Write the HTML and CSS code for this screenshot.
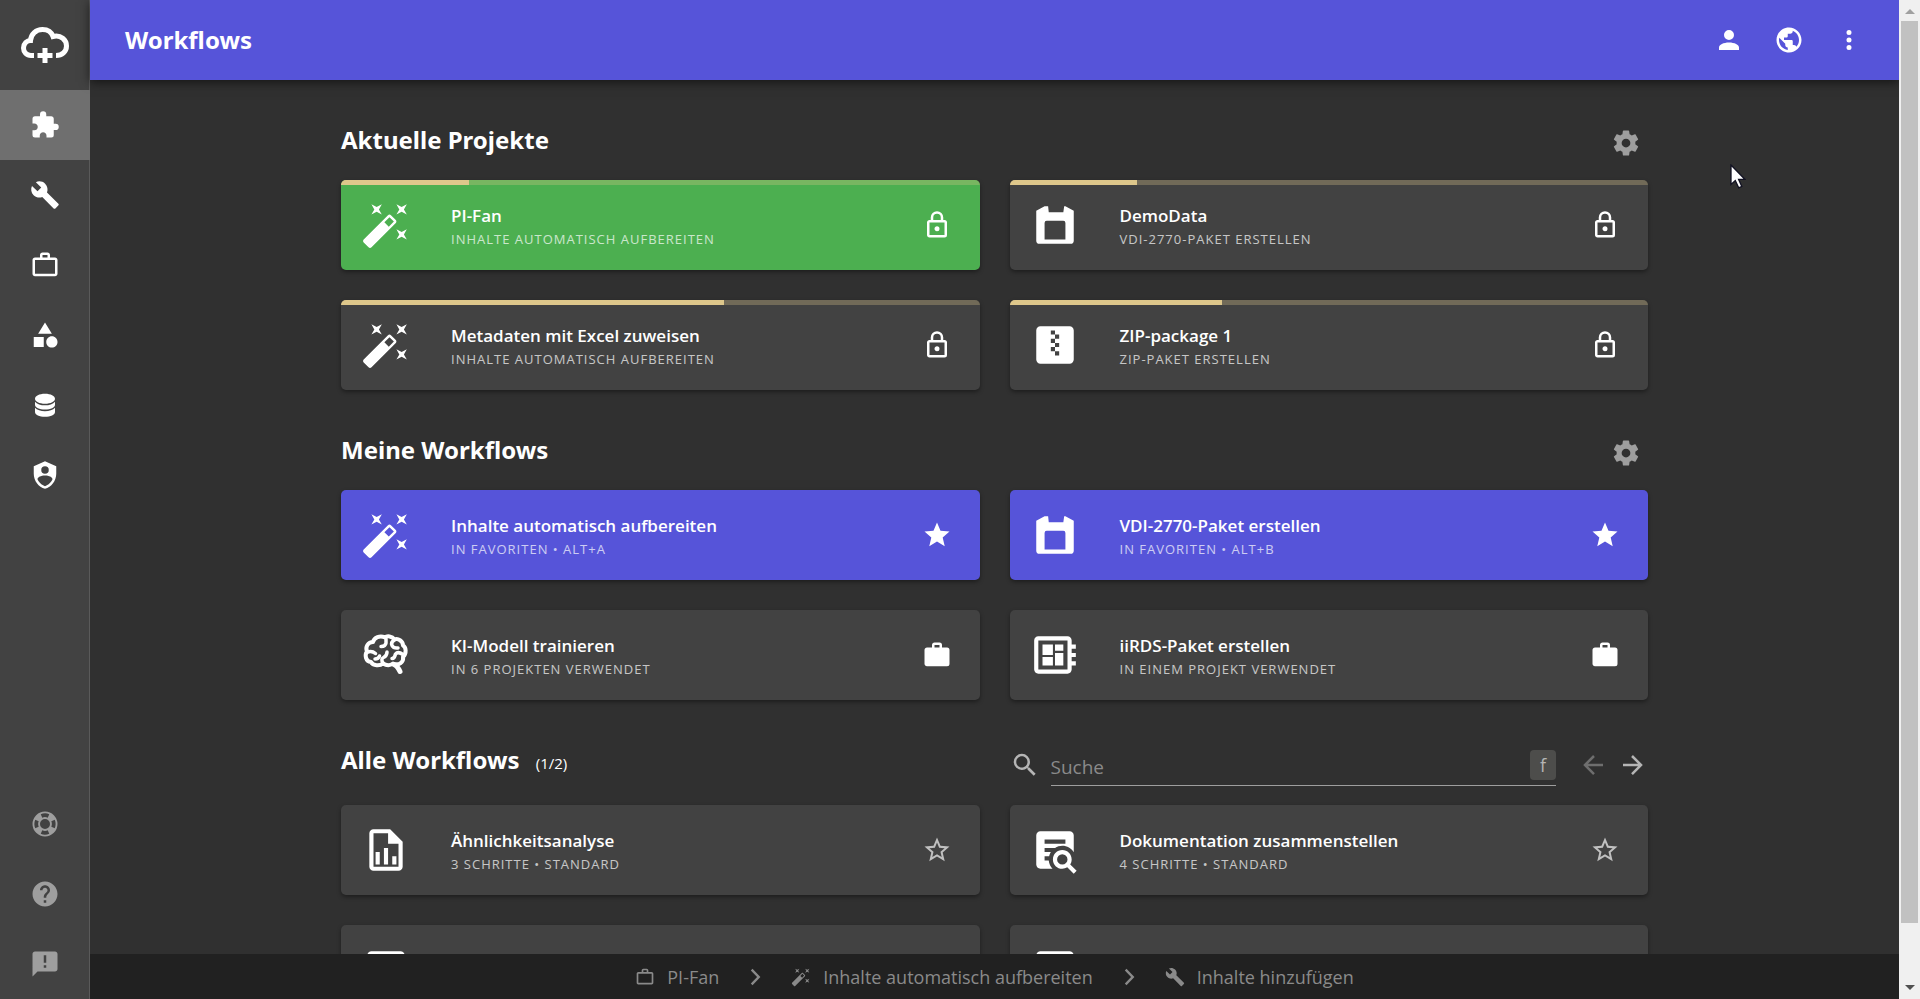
FILE: index.html
```html
<!DOCTYPE html>
<html lang="de">
<head>
    <meta charset="UTF-8">
    <meta name="viewport" content="width=device-width, initial-scale=1.0">
    <title>Workflows</title>
    <link rel="stylesheet" href="styles.css">
</head>
<body>
    <!-- Icons -->
    <svg class="sprite" aria-hidden="true">
        <symbol id="puzzle" viewBox="0 0 24 24"><path d="M20.5,11H19V7C19,5.89 18.1,5 17,5H13V3.5A2.5,2.5 0 0,0 10.5,1A2.5,2.5 0 0,0 8,3.5V5H4A2,2 0 0,0 2,7V10.8H3.5C5,10.8 6.2,12 6.2,13.5C6.2,15 5,16.2 3.5,16.2H2V20A2,2 0 0,0 4,22H7.8V20.5C7.8,19 9,17.8 10.5,17.8C12,17.8 13.2,19 13.2,20.5V22H17A2,2 0 0,0 19,20V16H20.5A2.5,2.5 0 0,0 23,13.5A2.5,2.5 0 0,0 20.5,11Z"/></symbol>
        <symbol id="wrench" viewBox="0 0 24 24"><path d="M22.7,19L13.6,9.9C14.5,7.6 14,4.9 12.1,3C10.1,1 7.1,0.6 4.7,1.7L9,6L6,9L1.6,4.7C0.4,7.1 0.9,10.1 2.9,12.1C4.8,14 7.5,14.5 9.8,13.6L18.9,22.7C19.3,23.1 19.9,23.1 20.3,22.7L22.6,20.4C23.1,20 23.1,19.3 22.7,19Z"/></symbol>
        <symbol id="briefcase-outline" viewBox="0 0 24 24"><path d="M14 6V4h-4v2h4zM4 8v11h16V8H4zm16-2c1.11 0 2 .89 2 2v11c0 1.11-.89 2-2 2H4c-1.11 0-2-.89-2-2l.01-11c0-1.11.88-2 1.99-2h4V4c0-1.11.89-2 2-2h4c1.11 0 2 .89 2 2v2h4z"/></symbol>
        <symbol id="briefcase" viewBox="0 0 24 24"><path d="M10,2H14A2,2 0 0,1 16,4V6H20A2,2 0 0,1 22,8V19A2,2 0 0,1 20,21H4C2.89,21 2,20.1 2,19V8C2,6.89 2.89,6 4,6H8V4C8,2.89 8.89,2 10,2M14,6V4H10V6H14Z"/></symbol>
        <symbol id="shape" viewBox="0 0 24 24"><path d="M11,13.5V21.5H3V13.5H11M12,2L17.5,11H6.5L12,2M17.5,13C20,13 22,15 22,17.5C22,20 20,22 17.5,22C15,22 13,20 13,17.5C13,15 15,13 17.5,13Z"/></symbol>
        <symbol id="database" viewBox="0 0 24 24"><path d="M12 3c4.6 0 8 1.7 8 4s-3.400 4-8 4-8-1.700-8-4 3.400-4 8-4zM4 9.300c1.500 1.900 4.600 2.900 8 2.900s6.500-1 8-2.900v2.500c0 2.200-3.500 3.800-8 3.800s-8-1.600-8-3.800zM4 14.200c1.500 1.900 4.600 2.700 8 2.700s6.500-.8 8-2.700v3.300c0 2.200-3.500 3.900-8 3.900s-8-1.700-8-3.900z"/></symbol>
        <symbol id="shield-account" viewBox="0 0 24 24"><path d="M12,1L3,5V11C3,16.55 6.84,21.74 12,23C17.16,21.74 21,16.55 21,11V5L12,1M12,5A3,3 0 0,1 15,8A3,3 0 0,1 12,11A3,3 0 0,1 9,8A3,3 0 0,1 12,5M17.13,17C15.92,18.85 14.11,20.24 12,20.92C9.89,20.24 8.08,18.85 6.87,17C6.53,16.5 6.24,16 6,15.47C6,13.82 8.71,12.47 12,12.47C15.29,12.47 18,13.79 18,15.47C17.76,16 17.47,16.5 17.13,17Z"/></symbol>
        <symbol id="lifebuoy" viewBox="0 0 24 24"><path d="M19.79,15.41C20.74,13.24 20.74,10.75 19.79,8.59L17.05,9.83C17.65,11.21 17.65,12.78 17.06,14.17L19.79,15.41M15.42,4.21C13.25,3.26 10.76,3.26 8.59,4.21L9.83,6.94C11.22,6.35 12.79,6.35 14.18,6.95L15.42,4.21M4.21,8.58C3.26,10.76 3.26,13.24 4.21,15.42L6.95,14.17C6.35,12.79 6.35,11.21 6.95,9.82L4.21,8.58M8.59,19.79C10.76,20.74 13.25,20.74 15.42,19.78L14.18,17.05C12.8,17.65 11.22,17.65 9.84,17.06L8.59,19.79M12,2A10,10 0 0,1 22,12A10,10 0 0,1 12,22A10,10 0 0,1 2,12A10,10 0 0,1 12,2M12,8A4,4 0 0,0 8,12A4,4 0 0,0 12,16A4,4 0 0,0 16,12A4,4 0 0,0 12,8Z"/></symbol>
        <symbol id="help" viewBox="0 0 24 24"><path d="M12 2C6.48 2 2 6.48 2 12s4.48 10 10 10 10-4.48 10-10S17.52 2 12 2zm1 17h-2v-2h2v2zm2.07-7.75l-.9.92C13.45 12.9 13 13.5 13 15h-2v-.5c0-1.1.45-2.1 1.17-2.83l1.24-1.26c.37-.36.59-.86.59-1.41 0-1.1-.9-2-2-2s-2 .9-2 2H8c0-2.21 1.79-4 4-4s4 1.79 4 4c0 .88-.36 1.68-.93 2.25z"/></symbol>
        <symbol id="feedback" viewBox="0 0 24 24"><path d="M20 2H4c-1.1 0-1.99.9-1.99 2L2 22l4-4h14c1.1 0 2-.9 2-2V4c0-1.1-.9-2-2-2zm-7 13h-2v-2h2v2zm0-4h-2V5h2v6z"/></symbol>
        <symbol id="account" viewBox="0 0 24 24"><path d="M12,4A4,4 0 0,1 16,8A4,4 0 0,1 12,12A4,4 0 0,1 8,8A4,4 0 0,1 12,4M12,14C16.42,14 20,15.79 20,18V20H4V18C4,15.79 7.58,14 12,14Z"/></symbol>
        <symbol id="earth" viewBox="0 0 24 24"><path d="M12 2C6.48 2 2 6.48 2 12s4.48 10 10 10 10-4.48 10-10S17.52 2 12 2zm-1 17.930c-3.95-.49-7-3.850-7-7.930 0-.62.080-1.210.210-1.790L9 15v1c0 1.100.9 2 2 2v1.930zm6.900-2.540c-.26-.81-1-1.390-1.900-1.390h-1v-3c0-.55-.45-1-1-1H8v-2h2c.55 0 1-.45 1-1V7h2c1.100 0 2-.9 2-2v-.41c2.930 1.190 5 4.060 5 7.410 0 2.080-.8 3.970-2.100 5.390z"/></symbol>
        <symbol id="dots" viewBox="0 0 24 24"><path d="M12,16A2,2 0 0,1 14,18A2,2 0 0,1 12,20A2,2 0 0,1 10,18A2,2 0 0,1 12,16M12,10A2,2 0 0,1 14,12A2,2 0 0,1 12,14A2,2 0 0,1 10,12A2,2 0 0,1 12,10M12,4A2,2 0 0,1 14,6A2,2 0 0,1 12,8A2,2 0 0,1 10,6A2,2 0 0,1 12,4Z"/></symbol>
        <symbol id="cog" viewBox="0 0 24 24"><path d="M12,15.5A3.5,3.5 0 0,1 8.5,12A3.5,3.5 0 0,1 12,8.5A3.5,3.5 0 0,1 15.5,12A3.5,3.5 0 0,1 12,15.5M19.43,12.97C19.47,12.65 19.5,12.33 19.5,12C19.5,11.67 19.47,11.34 19.43,11L21.54,9.37C21.73,9.22 21.78,8.95 21.66,8.73L19.66,5.27C19.54,5.05 19.27,4.96 19.05,5.05L16.56,6.05C16.04,5.66 15.5,5.32 14.87,5.07L14.5,2.42C14.46,2.18 14.25,2 14,2H10C9.75,2 9.54,2.18 9.5,2.42L9.13,5.07C8.5,5.32 7.96,5.66 7.44,6.05L4.95,5.05C4.73,4.96 4.46,5.05 4.34,5.27L2.34,8.73C2.21,8.95 2.27,9.22 2.46,9.37L4.57,11C4.53,11.34 4.5,11.67 4.5,12C4.5,12.33 4.53,12.65 4.57,12.97L2.46,14.63C2.27,14.78 2.21,15.05 2.34,15.27L4.34,18.73C4.46,18.95 4.73,19.03 4.95,18.95L7.44,17.94C7.96,18.34 8.5,18.68 9.13,18.93L9.5,21.58C9.54,21.82 9.75,22 10,22H14C14.25,22 14.46,21.82 14.5,21.58L14.87,18.93C15.5,18.67 16.04,18.34 16.56,17.94L19.05,18.95C19.27,19.03 19.54,18.95 19.66,18.73L21.66,15.27C21.78,15.05 21.73,14.78 21.54,14.63L19.43,12.97Z"/></symbol>
        <symbol id="lock" viewBox="0 0 24 24"><path d="M12,17C10.89,17 10,16.1 10,15C10,13.89 10.89,13 12,13A2,2 0 0,1 14,15A2,2 0 0,1 12,17M18,20V10H6V20H18M18,8A2,2 0 0,1 20,10V20A2,2 0 0,1 18,22H6C4.89,22 4,21.1 4,20V10C4,8.89 4.89,8 6,8H7V6A5,5 0 0,1 12,1A5,5 0 0,1 17,6V8H18M12,3A3,3 0 0,0 9,6V8H15V6A3,3 0 0,0 12,3Z"/></symbol>
        <symbol id="wand" viewBox="0 0 24 24"><path d="M7.5,5.6L5,7L6.4,4.5L5,2L7.5,3.4L10,2L8.6,4.5L10,7L7.5,5.6M19.5,15.4L22,14L20.6,16.5L22,19L19.5,17.6L17,19L18.4,16.5L17,14L19.5,15.4M22,2L20.6,4.5L22,7L19.5,5.6L17,7L18.4,4.5L17,2L19.5,3.4L22,2M13.34,12.78L15.78,10.34L13.66,8.22L11.22,10.66L13.34,12.78M14.37,7.29L16.71,9.63C17.1,10 17.1,10.65 16.71,11.04L5.04,22.71C4.65,23.1 4,23.1 3.63,22.71L1.29,20.37C0.9,20 0.9,19.35 1.29,18.96L12.96,7.29C13.35,6.9 14,6.9 14.37,7.29Z"/></symbol>
        <symbol id="vdi" viewBox="0 0 24 24"><path fill-rule="evenodd" d="M7 3h1.700L9 5.900h7l.4-2.900h.6L21 5.200V19.500A1.500 1.500 0 0 1 19.500 21H4.500A1.500 1.500 0 0 1 3 19.500V5.200zM8 10Q7 10 7 11V19H17V11Q17 10 16 10z"/></symbol>
        <symbol id="zip" viewBox="0 0 24 24"><path d="M14,17H12V15H10V13H12V15H14M14,9H12V11H14V13H12V11H10V9H12V7H10V5H12V7H14M19,3H5C3.89,3 3,3.89 3,5V19A2,2 0 0,0 5,21H19A2,2 0 0,0 21,19V5C21,3.89 20.1,3 19,3Z"/></symbol>
        <symbol id="brain" viewBox="0 0 50 50"><g fill="none" stroke="currentColor" stroke-width="4" stroke-linecap="round" stroke-linejoin="round"><path d="M24 7.500C19 5 13 7.500 12 12 7 12 4 17 6 21.500 3.500 25 4.500 31.500 10 32 12 36 19 36 22 33.500 26 36 30 35 32 33.500 38 36 43 32 42 27 46 23 45 17 42 15.500 42 11 37 8 33.500 9.500 31 6 26 5.500 24 7.500z"/><path stroke-width="5" d="M33 34.500Q36.500 36 39 41.500"/><path stroke-width="3.500" d="M25 9V13Q24.500 16.500 20 16.500M6.500 22Q11 20.500 14.500 23.500M22 33Q19.500 29 22.500 27.500 26 26 26 22M33.500 10Q29.500 12 31 15.500 32.500 18.500 37 18M42 24.500Q37 21 34.500 24 33.500 28.500 31 28.500M14 29Q17.500 29 18.500 26"/></g></symbol>
        <symbol id="board" viewBox="0 0 24 24"><path d="M22 9V7h-2V5c0-1.100-.9-2-2-2H4c-1.100 0-2 .9-2 2v14c0 1.100.9 2 2 2h14c1.100 0 2-.9 2-2v-2h2v-2h-2v-2h2v-2h-2V9h2zm-4 10H4V5h14v14zM6 13h5v4H6v-4zm6-6h4v3h-4V7zM6 7h5v5H6V7zm6 4h4v6h-4v-6z"/></symbol>
        <symbol id="chart" viewBox="0 0 24 24"><path fill-rule="evenodd" d="M6 2h8l6 6v12a2 2 0 0 1-2 2H6a2 2 0 0 1-2-2V4A2 2 0 0 1 6 2zM6 4V20H18V9H13V4z"/><path d="M7 13h2v6H7zM11 11h2v8h-2zM15 15h2v4h-2z"/></symbol>
        <symbol id="text-search" viewBox="0 0 24 24"><path d="M15.5,12C18,12 20,14 20,16.5C20,17.38 19.75,18.21 19.31,18.9L22.39,22L21,23.39L17.88,20.32C17.19,20.75 16.37,21 15.5,21C13,21 11,19 11,16.5C11,14 13,12 15.5,12M15.5,14A2.5,2.5 0 0,0 13,16.5A2.5,2.5 0 0,0 15.5,19A2.5,2.5 0 0,0 18,16.5A2.5,2.5 0 0,0 15.5,14M7,15V17H9C9.14,18.55 9.8,19.94 10.81,21H5C3.89,21 3,20.1 3,19V5C3,3.89 3.89,3 5,3H19A2,2 0 0,1 21,5V13.03C19.85,11.21 17.82,10 15.5,10C14.23,10 13.04,10.37 12.04,11H7V13H10C9.64,13.6 9.34,14.28 9.17,15H7M17,9V7H7V9H17Z"/></symbol>
        <symbol id="star" viewBox="0 0 24 24"><path d="M12,17.27L18.18,21L16.54,13.97L22,9.24L14.81,8.62L12,2L9.19,8.62L2,9.24L7.45,13.97L5.82,21L12,17.27Z"/></symbol>
        <symbol id="star-outline" viewBox="0 0 24 24"><path d="M12,15.39L8.24,17.66L9.23,13.38L5.91,10.5L10.29,10.13L12,6.09L13.71,10.13L18.09,10.5L14.77,13.38L15.76,17.66M22,9.24L14.81,8.63L12,2L9.19,8.63L2,9.24L7.45,13.97L5.82,21L12,17.27L18.18,21L16.54,13.97L22,9.24Z"/></symbol>
        <symbol id="magnify" viewBox="0 0 24 24"><path d="M9.5,3A6.5,6.5 0 0,1 16,9.5C16,11.11 15.41,12.59 14.44,13.73L14.71,14H15.5L20.5,19L19,20.5L14,15.5V14.71L13.73,14.44C12.59,15.41 11.11,16 9.5,16A6.5,6.5 0 0,1 3,9.5A6.5,6.5 0 0,1 9.5,3M9.500,5C7,5 5,7 5,9.5C5,12 7,14 9.500,14C12,14 14,12 14,9.5C14,7 12,5 9.500,5Z"/></symbol>
        <symbol id="arrow-right" viewBox="0 0 24 24"><path d="M4,11V13H16L10.5,18.5L11.92,19.92L19.84,12L11.92,4.08L10.5,5.5L16,11H4Z"/></symbol>
        <symbol id="arrow-left" viewBox="0 0 24 24"><path d="M20,11V13H8L13.5,18.5L12.08,19.92L4.16,12L12.08,4.08L13.5,5.5L8,11H20Z"/></symbol>
        <symbol id="chevron" viewBox="0 0 24 24"><path d="M7 4.200L9 2.200 18.500 12 9 21.800 7 19.800 14.500 12z"/></symbol>
    </svg>

    <nav class="sidebar">
        <a href="#" class="logo" aria-label="Start">
            <svg viewBox="0 0 48 36" fill="none" stroke="currentColor" stroke-width="5">
                <path d="M13 28.500H10C5.500 28.500 2.500 25 2.500 21 2.500 16.500 6 13.500 9.500 13.500 10 7 15 2.500 21.500 2.500 26.500 2.500 30.500 5 32 9.500 40 7.500 45.500 13 45.500 19 45.500 24.500 41 28.500 35 28.500"/>
                <path d="M24 21v15M16.500 28.500h15"/>
            </svg>
        </a>
        <a href="#" class="nav-item active" aria-label="Workflows"><svg><use href="#puzzle"/></svg></a>
        <a href="#" class="nav-item" aria-label="Werkzeuge"><svg><use href="#wrench"/></svg></a>
        <a href="#" class="nav-item" aria-label="Projekte"><svg><use href="#briefcase-outline"/></svg></a>
        <a href="#" class="nav-item" aria-label="Objekte"><svg><use href="#shape"/></svg></a>
        <a href="#" class="nav-item" aria-label="Daten"><svg><use href="#database"/></svg></a>
        <a href="#" class="nav-item" aria-label="Rechte"><svg><use href="#shield-account"/></svg></a>
        <div class="nav-bottom">
            <a href="#" class="nav-item" aria-label="Support"><svg><use href="#lifebuoy"/></svg></a>
            <a href="#" class="nav-item" aria-label="Hilfe"><svg><use href="#help"/></svg></a>
            <a href="#" class="nav-item" aria-label="Feedback"><svg><use href="#feedback"/></svg></a>
        </div>
    </nav>

    <div class="page">
        <header class="topbar">
            <h1>Workflows</h1>
            <button class="top-btn" aria-label="Konto"><svg><use href="#account"/></svg></button>
            <button class="top-btn" aria-label="Sprache"><svg><use href="#earth"/></svg></button>
            <button class="top-btn" aria-label="Mehr"><svg><use href="#dots"/></svg></button>
        </header>

        <main class="content">
            <div class="container">
                <section>
                    <div class="section-head">
                        <h2>Aktuelle Projekte</h2>
                        <button class="cog-btn" aria-label="Einstellungen"><svg><use href="#cog"/></svg></button>
                    </div>
                    <div class="cards">
                        <a href="#" class="card green">
                            <span class="progress"><span class="bar" style="width: 20%"></span></span>
                            <svg class="card-icon"><use href="#wand"/></svg>
                            <span class="card-text"><span class="title">PI-Fan</span><span class="sub">Inhalte automatisch aufbereiten</span></span>
                            <svg class="card-action"><use href="#lock"/></svg>
                        </a>
                        <a href="#" class="card">
                            <span class="progress"><span class="bar" style="width: 20%"></span></span>
                            <svg class="card-icon"><use href="#vdi"/></svg>
                            <span class="card-text"><span class="title">DemoData</span><span class="sub">VDI-2770-Paket erstellen</span></span>
                            <svg class="card-action"><use href="#lock"/></svg>
                        </a>
                        <a href="#" class="card">
                            <span class="progress"><span class="bar" style="width: 60%"></span></span>
                            <svg class="card-icon"><use href="#wand"/></svg>
                            <span class="card-text"><span class="title">Metadaten mit Excel zuweisen</span><span class="sub">Inhalte automatisch aufbereiten</span></span>
                            <svg class="card-action"><use href="#lock"/></svg>
                        </a>
                        <a href="#" class="card">
                            <span class="progress"><span class="bar" style="width: 33.3%"></span></span>
                            <svg class="card-icon"><use href="#zip"/></svg>
                            <span class="card-text"><span class="title">ZIP-package 1</span><span class="sub">ZIP-Paket erstellen</span></span>
                            <svg class="card-action"><use href="#lock"/></svg>
                        </a>
                    </div>
                </section>

                <section>
                    <div class="section-head">
                        <h2>Meine Workflows</h2>
                        <button class="cog-btn" aria-label="Einstellungen"><svg><use href="#cog"/></svg></button>
                    </div>
                    <div class="cards">
                        <a href="#" class="card blue">
                            <svg class="card-icon"><use href="#wand"/></svg>
                            <span class="card-text"><span class="title">Inhalte automatisch aufbereiten</span><span class="sub">In Favoriten • Alt+A</span></span>
                            <svg class="card-action"><use href="#star"/></svg>
                        </a>
                        <a href="#" class="card blue">
                            <svg class="card-icon"><use href="#vdi"/></svg>
                            <span class="card-text"><span class="title">VDI-2770-Paket erstellen</span><span class="sub">In Favoriten • Alt+B</span></span>
                            <svg class="card-action"><use href="#star"/></svg>
                        </a>
                        <a href="#" class="card">
                            <svg class="card-icon"><use href="#brain"/></svg>
                            <span class="card-text"><span class="title">KI-Modell trainieren</span><span class="sub">In 6 Projekten verwendet</span></span>
                            <svg class="card-action"><use href="#briefcase"/></svg>
                        </a>
                        <a href="#" class="card">
                            <svg class="card-icon"><use href="#board"/></svg>
                            <span class="card-text"><span class="title">iiRDS-Paket erstellen</span><span class="sub">In einem Projekt verwendet</span></span>
                            <svg class="card-action"><use href="#briefcase"/></svg>
                        </a>
                    </div>
                </section>

                <section>
                    <div class="section-head with-search">
                        <h2>Alle Workflows <span class="count">(1/2)</span></h2>
                        <div class="search">
                            <label for="search" aria-label="Suche"><svg><use href="#magnify"/></svg></label>
                            <div class="field">
                                <input type="text" id="search" placeholder="Suche">
                                <kbd>f</kbd>
                            </div>
                            <div class="pager">
                                <button aria-label="Zurück" disabled><svg><use href="#arrow-left"/></svg></button>
                                <button aria-label="Weiter"><svg><use href="#arrow-right"/></svg></button>
                            </div>
                        </div>
                    </div>
                    <div class="cards">
                        <a href="#" class="card">
                            <svg class="card-icon"><use href="#chart"/></svg>
                            <span class="card-text"><span class="title">Ähnlichkeitsanalyse</span><span class="sub">3 Schritte • Standard</span></span>
                            <svg class="card-action muted"><use href="#star-outline"/></svg>
                        </a>
                        <a href="#" class="card">
                            <svg class="card-icon"><use href="#text-search"/></svg>
                            <span class="card-text"><span class="title">Dokumentation zusammenstellen</span><span class="sub">4 Schritte • Standard</span></span>
                            <svg class="card-action muted"><use href="#star-outline"/></svg>
                        </a>
                        <a href="#" class="card">
                            <svg class="card-icon"><use href="#zip"/></svg>
                            <span class="card-text"><span class="title">iiRDS-Paket erstellen</span></span>
                            <svg class="card-action muted"><use href="#star-outline"/></svg>
                        </a>
                        <a href="#" class="card">
                            <svg class="card-icon"><use href="#zip"/></svg>
                            <span class="card-text"><span class="title">ZIP-Paket erstellen</span></span>
                            <svg class="card-action muted"><use href="#star-outline"/></svg>
                        </a>
                    </div>
                </section>
            </div>
        </main>

        <footer class="crumbs">
            <a href="#"><svg><use href="#briefcase-outline"/></svg>PI-Fan</a>
            <svg class="sep"><use href="#chevron"/></svg>
            <a href="#"><svg><use href="#wand"/></svg>Inhalte automatisch aufbereiten</a>
            <svg class="sep"><use href="#chevron"/></svg>
            <a href="#"><svg><use href="#wrench"/></svg>Inhalte hinzufügen</a>
        </footer>
    </div>

    <div class="scrollbar" aria-hidden="true">
        <span class="arrow up"></span>
        <span class="thumb"></span>
        <span class="arrow down"></span>
    </div>

    <svg class="cursor" viewBox="0 0 16 25" aria-hidden="true"><path d="M1 1V20.500L5.300 16.500 8.700 23.800 11.800 22.400 8.600 15.300H14.800z" fill="#fff" stroke="#111122" stroke-width="1.300"/></svg>
</body>
</html>
```
FILE: styles.css
```css
* {
    box-sizing: border-box;
}

body {
    margin: 0;
    height: 100vh;
    display: flex;
    overflow: hidden;
    background-color: #303030;
    color: #fff;
    font-family: "Open Sans", "Noto Sans", sans-serif;
}

a {
    color: inherit;
    text-decoration: none;
}

button {
    display: flex;
    align-items: center;
    justify-content: center;
    padding: 0;
    border: none;
    background: none;
    color: inherit;
    cursor: pointer;
}

svg {
    display: block;
    flex: none;
    width: 30px;
    height: 30px;
    fill: currentColor;
}

.sprite {
    display: none;
}

/* Sidebar */
.sidebar {
    flex: none;
    width: 90px;
    display: flex;
    flex-direction: column;
    background-color: #424242;
    border-right: 1px solid #5a5a5a;
}

.logo {
    height: 90px;
    display: flex;
    align-items: center;
    justify-content: center;
}

.logo svg {
    width: 48px;
    height: 36px;
    fill: none;
}

.nav-item {
    height: 70px;
    display: flex;
    align-items: center;
    justify-content: center;
}

.nav-item.active {
    background-color: #6f6f6f;
    margin-right: -1px;
    padding-right: 1px;
}

.nav-bottom {
    margin-top: auto;
    color: #9e9e9e;
}

/* Page */
.page {
    flex: 1;
    min-width: 0;
    display: flex;
    flex-direction: column;
}

.topbar {
    flex: none;
    height: 80px;
    display: flex;
    align-items: center;
    padding: 0 20px 0 35px;
    background-color: #5654d9;
    box-shadow: 0 2px 10px rgba(0, 0, 0, 0.6);
}

h1, h2 {
    margin: 0;
    font-family: "Noto Sans", "Open Sans", sans-serif;
    font-size: 24px;
    font-weight: 700;
    line-height: 40px;
}

h1 {
    margin-right: auto;
}

.top-btn {
    width: 60px;
    height: 60px;
}

.content {
    flex: 1;
    min-height: 0;
    overflow: hidden;
}

.container {
    max-width: 1307px;
    margin: 0 auto;
}

section {
    padding-top: 40px;
}

.section-head {
    height: 45px;
    display: flex;
    justify-content: space-between;
    margin-bottom: 15px;
}

.section-head.with-search {
    height: 50px;
}

.cog-btn {
    width: 45px;
    height: 45px;
    color: #9e9e9e;
}

.count {
    margin-left: 10px;
    font-family: "Open Sans", "Noto Sans", sans-serif;
    font-size: 15px;
    font-weight: 400;
}

.search {
    width: calc(50% - 15px);
    display: flex;
    align-items: center;
    color: #b5b5b5;
}

.field {
    flex: 1;
    height: 42px;
    display: flex;
    align-items: center;
    margin: 0 22px 0 11px;
    border-bottom: 1px solid #9e9e9e;
}

.field input {
    flex: 1;
    min-width: 0;
    height: 38px;
    padding: 4px 0 0;
    border: none;
    outline: none;
    background: none;
    color: #fff;
    font: inherit;
    font-size: 19px;
}

.field input::placeholder {
    color: #8a8a8a;
    opacity: 1;
}

kbd {
    width: 26px;
    height: 30px;
    border-radius: 4px;
    background-color: #4d4d4b;
    font-family: inherit;
    font-size: 18px;
    line-height: 30px;
    text-align: center;
}

.pager {
    display: flex;
    gap: 10px;
}

.pager button:disabled {
    color: #6e6e6e;
}

/* Cards */
.cards {
    display: grid;
    grid-template-columns: 1fr 1fr;
    gap: 30px;
}

.card {
    position: relative;
    height: 90px;
    display: flex;
    align-items: center;
    padding: 0 28px 0 20px;
    overflow: hidden;
    border-radius: 5px;
    background-color: #424242;
    box-shadow: 0 2px 4px rgba(0, 0, 0, 0.4);
}

.card.green {
    background-color: #4caf50;
}

.card.blue {
    background-color: #5654d9;
}

.progress {
    position: absolute;
    top: 0;
    left: 0;
    right: 0;
    height: 5px;
    background-color: rgba(222, 199, 139, 0.3);
}

.bar {
    display: block;
    height: 100%;
    background-color: #dec78b;
}

.card-icon {
    width: 50px;
    height: 50px;
}

.card-text {
    flex: 1;
    height: 50px;
    margin-left: 40px;
    padding-top: 4px;
    display: flex;
    flex-direction: column;
}

.title {
    font-size: 17px;
    font-weight: 600;
    line-height: 24px;
}

.sub {
    font-size: 13px;
    line-height: 22px;
    letter-spacing: 1px;
    text-transform: uppercase;
    opacity: 0.7;
}

.muted {
    color: #c0c0c0;
}

/* Breadcrumbs */
.crumbs {
    flex: none;
    height: 45px;
    display: flex;
    align-items: center;
    justify-content: center;
    gap: 26px;
    background-color: #212121;
    color: #8a8a8a;
    font-size: 18px;
}

.crumbs a {
    display: flex;
    align-items: center;
    gap: 12px;
}

.crumbs svg {
    width: 20px;
    height: 20px;
}

/* Scrollbar */
.scrollbar {
    flex: none;
    width: 21px;
    display: flex;
    flex-direction: column;
    align-items: center;
    background-color: #f0f0f0;
}

.thumb {
    flex: 1;
    width: 17px;
    margin-bottom: 62px;
    background-color: #c1c1c1;
}

.arrow {
    width: 0;
    height: 0;
    border-left: 5px solid transparent;
    border-right: 5px solid transparent;
}

.arrow.up {
    border-bottom: 5px solid #a0a0a0;
    margin: 9px 0 7px;
}

.arrow.down {
    border-top: 5px solid #505050;
    margin-bottom: 9px;
}

.cursor {
    position: absolute;
    top: 164px;
    left: 1730px;
    width: 16px;
    height: 25px;
}
```
